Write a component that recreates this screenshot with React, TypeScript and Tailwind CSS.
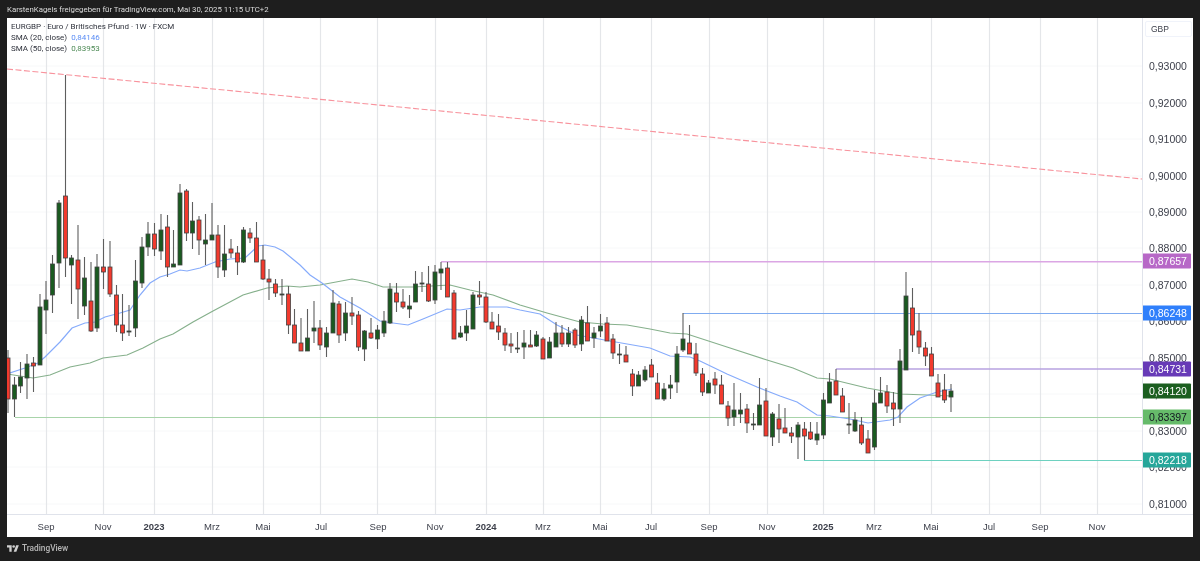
import React from 'react';

// [colour, body top, body bottom, wick top, wick bottom] in page pixels
type Candle = ['r' | 'g', number, number, number, number];

const candles: Candle[] = [
  ['r', 358, 399, 350, 413], ['g', 385, 399, 377, 417], ['g', 377, 386, 362, 393], ['g', 364, 378, 354, 399],
  ['r', 363, 366, 357, 392], ['g', 307, 365, 294, 365], ['g', 300, 310, 281, 334], ['g', 264, 295, 255, 313],
  ['g', 203, 263, 200, 288], ['r', 196, 258, 75, 277], ['g', 258, 265, 255, 304], ['r', 260, 289, 225, 319],
  ['g', 278, 306, 257, 315], ['r', 301, 331, 262, 332], ['g', 267, 328, 254, 332], ['r', 267, 272, 239, 289],
  ['r', 267, 294, 241, 297], ['r', 295, 325, 285, 332], ['r', 325, 333, 294, 341], ['g', 331, 332, 305, 336],
  ['g', 281, 328, 260, 337], ['g', 247, 283, 237, 288], ['g', 234, 247, 222, 256], ['r', 234, 249, 223, 256],
  ['g', 230, 251, 214, 260], ['r', 227, 267, 215, 277], ['g', 264, 267, 230, 267], ['g', 193, 265, 184, 265],
  ['r', 191, 233, 189, 241], ['g', 221, 233, 202, 249], ['r', 220, 240, 216, 255], ['g', 240, 244, 214, 265],
  ['g', 235, 240, 203, 240], ['r', 235, 267, 225, 278], ['g', 254, 270, 225, 277], ['r', 249, 253, 239, 258],
  ['r', 253, 262, 246, 275], ['g', 230, 262, 227, 263], ['r', 233, 238, 228, 243], ['r', 238, 262, 222, 262],
  ['r', 260, 279, 245, 280], ['r', 279, 282, 269, 300], ['r', 284, 293, 279, 297], ['g', 294, 295, 279, 305],
  ['r', 294, 325, 286, 334], ['r', 325, 343, 309, 343], ['r', 343, 351, 318, 351], ['g', 338, 351, 309, 351],
  ['g', 328, 331, 301, 343], ['r', 328, 345, 320, 350], ['g', 333, 347, 327, 357], ['g', 303, 333, 290, 333],
  ['r', 304, 335, 301, 343], ['g', 313, 333, 302, 341], ['r', 313, 316, 297, 325], ['r', 315, 347, 311, 351],
  ['g', 331, 349, 330, 361], ['r', 333, 338, 318, 339], ['g', 330, 339, 325, 349], ['g', 321, 333, 311, 337],
  ['g', 289, 323, 283, 324], ['r', 293, 302, 283, 312], ['r', 302, 307, 289, 309], ['g', 306, 309, 295, 318],
  ['g', 284, 302, 271, 302], ['g', 283, 284, 272, 292], ['r', 284, 301, 266, 302], ['g', 272, 300, 265, 304],
  ['g', 269, 273, 262, 290], ['r', 268, 297, 262, 297], ['r', 293, 339, 290, 339], ['g', 333, 337, 326, 338],
  ['g', 326, 333, 310, 341], ['g', 295, 329, 292, 329], ['r', 295, 297, 281, 305], ['r', 297, 322, 292, 323],
  ['r', 322, 329, 312, 329], ['r', 326, 332, 314, 340], ['r', 333, 345, 328, 351], ['r', 344, 346, 333, 353],
  ['g', 348, 349, 332, 353], ['g', 343, 347, 330, 359], ['r', 345, 347, 330, 347], ['g', 335, 346, 331, 347],
  ['r', 339, 359, 337, 359], ['g', 342, 358, 337, 358], ['g', 333, 347, 322, 347], ['r', 333, 344, 325, 347],
  ['g', 333, 344, 327, 347], ['r', 330, 345, 328, 348], ['g', 320, 344, 316, 351], ['r', 323, 341, 306, 341],
  ['g', 333, 338, 327, 348], ['g', 326, 331, 314, 337], ['r', 323, 341, 317, 341], ['r', 339, 353, 334, 359],
  ['g', 354, 355, 344, 364], ['r', 355, 362, 346, 362], ['r', 374, 386, 369, 396], ['g', 375, 386, 371, 386],
  ['g', 370, 380, 366, 382], ['r', 365, 377, 359, 377], ['r', 383, 399, 373, 399], ['g', 389, 399, 383, 401],
  ['g', 385, 388, 375, 399], ['g', 354, 382, 346, 393], ['g', 339, 350, 313, 352], ['r', 343, 354, 325, 354],
  ['r', 354, 373, 343, 376], ['r', 374, 392, 368, 396], ['g', 383, 393, 380, 393], ['r', 379, 385, 372, 394],
  ['r', 385, 404, 375, 404], ['r', 406, 418, 401, 426], ['g', 410, 417, 383, 426], ['g', 410, 414, 393, 423],
  ['r', 409, 423, 404, 433], ['g', 424, 425, 413, 430], ['g', 405, 425, 378, 425], ['r', 401, 436, 388, 436],
  ['g', 414, 437, 412, 446], ['r', 419, 429, 404, 443], ['r', 428, 433, 408, 433], ['r', 433, 436, 427, 443],
  ['g', 425, 437, 422, 459], ['r', 429, 436, 422, 460], ['r', 432, 439, 422, 440], ['g', 434, 440, 422, 445],
  ['g', 400, 435, 393, 439], ['g', 382, 403, 373, 403], ['r', 381, 395, 369, 395], ['r', 396, 412, 388, 412],
  ['g', 424, 425, 403, 434], ['g', 420, 431, 412, 432], ['r', 425, 443, 417, 445], ['r', 439, 453, 430, 453],
  ['g', 403, 447, 390, 450], ['g', 393, 403, 377, 403], ['r', 392, 406, 385, 413], ['r', 403, 409, 392, 426],
  ['g', 361, 409, 349, 423], ['g', 296, 370, 272, 370], ['r', 308, 335, 288, 352], ['r', 331, 347, 313, 354],
  ['r', 348, 356, 342, 366], ['r', 354, 376, 347, 376], ['r', 383, 397, 374, 397], ['r', 390, 400, 374, 403],
  ['g', 391, 397, 384, 412],
];

const sma20 = '7,374 25,368 38,363 45,357 60,342 72,328 85,323 95,322 105,317 120,313 130,310 140,295 150,283 160,277 170,274 180,270 187,271 200,268 215,262 230,259 245,258 258,246 265,245 275,247 283,251 300,265 310,275 322,283 340,297 360,308 380,321 393,323 408,325 423,319 447,309 460,310 480,307 507,307 520,310 540,314 557,325 577,335 610,341 650,348 670,356 690,357 700,361 727,374 757,387 780,396 797,402 817,415 830,416 850,419 868,423 890,420 898,417 907,407 920,398 937,392 952,389';
const sma50 = '7,374 33,378 50,375 70,367 90,363 103,358 127,355 143,348 160,339 173,334 193,322 213,311 243,295 267,288 287,286 300,287 320,285 352,279 368,282 383,287 413,287 450,285 470,290 493,295 520,305 547,313 580,322 603,324 627,325 650,329 670,333 687,334 727,347 767,360 793,368 817,378 830,379 867,388 900,394 927,395 952,396';

const gridX = [46, 103, 154, 212, 263, 320, 377, 435, 486, 543, 600, 651, 709, 767, 823, 874, 931, 989, 1040, 1097];

const timeLabels = [
  ['Sep', 46], ['Nov', 103], ['2023', 154], ['Mrz', 212], ['Mai', 263], ['Jul', 321], ['Sep', 378],
  ['Nov', 435], ['2024', 486], ['Mrz', 543], ['Mai', 600], ['Jul', 651], ['Sep', 709], ['Nov', 767],
  ['2025', 823], ['Mrz', 874], ['Mai', 931], ['Jul', 989], ['Sep', 1040], ['Nov', 1097],
] as const;

const prices = [
  ['0,93000', 66], ['0,92000', 103], ['0,91000', 139], ['0,90000', 176], ['0,89000', 212], ['0,88000', 248],
  ['0,87000', 285], ['0,86000', 321], ['0,85000', 358], ['0,84000', 394], ['0,83000', 431], ['0,82000', 467],
  ['0,81000', 504],
] as const;

const levels = [
  { from: 441, y: 261.8, line: '#dba6e4', w: 1.4 },
  { from: 683, y: 313.5, line: '#7fabf0', w: 1.2 },
  { from: 836, y: 369, line: '#b7a2e0', w: 1.4 },
  { from: 15, y: 417.5, line: '#a8d4aa', w: 1.2 },
  { from: 804, y: 460.5, line: '#6ed1c0', w: 1.2 },
];

const tags = [
  { text: '0,87657', y: 261, bg: 'bg-[#b768c7]', fg: 'text-white' },
  { text: '0,86248', y: 313, bg: 'bg-[#2f7ffb]', fg: 'text-white' },
  { text: '0,84731', y: 369, bg: 'bg-[#673ab7]', fg: 'text-white' },
  { text: '0,84120', y: 391, bg: 'bg-[#1b5e20]', fg: 'text-white' },
  { text: '0,83397', y: 417, bg: 'bg-[#66bb6a]', fg: 'text-[#131722]' },
  { text: '0,82218', y: 460, bg: 'bg-[#26a69a]', fg: 'text-white' },
];

const CandleChart = () => (
  <svg width={1135} height={496} className="block">
    <g transform="translate(-7,-18)">
      {prices.map(([label, y]) => (
        <line key={label} x1={7} x2={1142} y1={y} y2={y} stroke="#f7f8f9" />
      ))}
      {gridX.map((x) => (
        <line key={x} x1={x + 0.5} x2={x + 0.5} y1={18} y2={514} stroke="#e4e6e9" strokeWidth={1.2} />
      ))}
      <line x1={7} y1={69} x2={1142} y2={179} stroke="#f8929c" strokeWidth={1.1} strokeDasharray="6 2.5" />
      {levels.map((l) => (
        <line key={l.y} x1={l.from} x2={1142} y1={l.y} y2={l.y} stroke={l.line} strokeWidth={l.w} />
      ))}
      <polyline points={sma50} fill="none" stroke="#86b08c" strokeWidth={1.2} />
      <polyline points={sma20} fill="none" stroke="#86abfb" strokeWidth={1.2} />
      {candles.map(([c, top, bottom, high, low], i) => {
        const x = Math.round((8 + i * 6.37) * 2) / 2;
        return (
          <g key={i}>
            <line x1={x} x2={x} y1={high} y2={low} stroke="#5e5e5e" strokeWidth={1.1} />
            <rect
              x={x - 2}
              y={top}
              width={4}
              height={Math.max(bottom - top, 1)}
              fill={c === 'r' ? '#f23a2e' : '#1a5a20'}
              stroke="#424242"
              strokeWidth={0.8}
            />
          </g>
        );
      })}
    </g>
  </svg>
);

const App = () => {
  return (
    <div className="flex h-[561px] w-[1200px] flex-col bg-[#1e1e1e] font-['Roboto',sans-serif] blur-[0.3px]">
      <div className="flex h-[18px] items-center px-[7px] pt-[2px] text-[7.8px] leading-none text-[#dcdcdc]">
        KarstenKagels freigegeben für TradingView.com, Mai 30, 2025 11:15 UTC+2
      </div>

      <div className="mx-[7px] flex h-[519px] flex-col bg-white">
        <div className="flex h-[496px]">
          <div className="relative w-[1135px]">
            <CandleChart />
            <div className="absolute left-[4px] top-[4px] flex flex-col gap-[1px] text-[8px] leading-[10px] text-[#2f323c]">
              <div>EURGBP · Euro / Britisches Pfund · 1W · FXCM</div>
              <div>
                SMA (20, close) <span className="ml-[2px] text-[#5b8df5]">0,84146</span>
              </div>
              <div>
                SMA (50, close) <span className="ml-[2px] text-[#4d8a55]">0,83953</span>
              </div>
            </div>
          </div>

          <div className="relative flex-1 border-l border-[#e0e3eb] font-['Liberation_Sans',sans-serif]">
            <div className="absolute left-[2px] top-[3px] flex h-[16px] w-[47px] items-center rounded-[2px] border border-[#f0f3fa] pl-[5px] text-[8.5px] text-[#3c3f4a]">
              GBP
            </div>
            {prices.map(([label, y]) => (
              <span
                key={label}
                className="absolute left-[6px] -translate-y-1/2 text-[10.5px] leading-none text-[#3c3f4a]"
                style={{ top: y - 18 }}
              >
                {label}
              </span>
            ))}
            {tags.map((t) => (
              <div
                key={t.text}
                className={`absolute left-0 flex h-[15px] w-[48px] -translate-y-1/2 items-center rounded-r-[1px] pl-[6px] text-[10.5px] leading-none ${t.bg} ${t.fg}`}
                style={{ top: t.y - 18 }}
              >
                {t.text}
              </div>
            ))}
          </div>
        </div>

        <div className="relative h-[23px] border-t border-[#e0e3eb] font-['Liberation_Sans',sans-serif] text-[9.5px] leading-none text-[#3c3f4a]">
          {timeLabels.map(([label, x]) => (
            <span
              key={`${label}${x}`}
              className={`absolute top-[7px] -translate-x-1/2 ${/^\d/.test(label) ? 'font-bold' : ''}`}
              style={{ left: x - 7 }}
            >
              {label}
            </span>
          ))}
        </div>
      </div>

      <div className="flex flex-1 items-center gap-[3px] px-[7px] pb-[1px]">
        <svg width="12" height="7" viewBox="0 0 36 20" fill="#d0d0d0">
          <path d="M14 20H7V7H0V0h14v20z" />
          <path d="M28 20h-8l7.5-20h8L28 20z" />
          <circle cx="20" cy="4" r="4" />
        </svg>
        <span className="text-[8.3px] font-medium leading-none text-[#b8b8b8]">TradingView</span>
      </div>
    </div>
  );
};

export default App;
